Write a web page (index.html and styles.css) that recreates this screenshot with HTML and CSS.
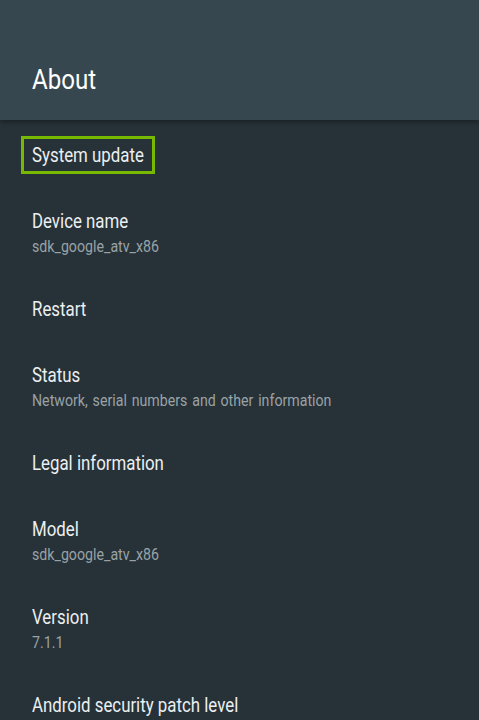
FILE: index.html
```html
<!DOCTYPE html>
<html lang="en">
<head>
<meta charset="utf-8">
<title>About</title>
<link rel="stylesheet" href="styles.css">
</head>
<body>
<div class="screen">
  <header class="header">
    <h1 class="header-title"><span class="txt">About</span></h1>
  </header>
  <ul class="list">
    <li class="item"><div class="title"><span class="focus"><span class="txt txt-fit">System update</span></span></div></li>
    <li class="item"><div class="title"><span class="txt">Device name</span></div><div class="summary"><span class="txt">sdk_google_atv_x86</span></div></li>
    <li class="item"><div class="title"><span class="txt">Restart</span></div></li>
    <li class="item"><div class="title"><span class="txt">Status</span></div><div class="summary"><span class="txt">Network, serial numbers and other information</span></div></li>
    <li class="item"><div class="title"><span class="txt">Legal information</span></div></li>
    <li class="item"><div class="title"><span class="txt">Model</span></div><div class="summary"><span class="txt">sdk_google_atv_x86</span></div></li>
    <li class="item"><div class="title"><span class="txt">Version</span></div><div class="summary"><span class="txt">7.1.1</span></div></li>
    <li class="item"><div class="title"><span class="txt">Android security patch level</span></div></li>
  </ul>
</div>
</body>
</html>
```
FILE: styles.css
```css
html, body {
  margin: 0;
  padding: 0;
  height: 100%;
  overflow: hidden;
  background: #263238;
}
.screen {
  width: 479px;
  min-height: 720px;
  font-family: Roboto, "Liberation Sans", sans-serif;
  background: #263238;
}
.txt {
  display: inline-block;
  white-space: nowrap;
  transform: scaleX(0.842);
  transform-origin: 0 50%;
}
.header {
  height: 120px;
  background: #37474f;
  box-shadow: 0 2px 5px rgba(0, 0, 0, 0.35);
  display: flex;
  align-items: flex-end;
  padding: 0 32px;
  box-sizing: border-box;
  position: relative;
  z-index: 1;
}
.header-title {
  margin: 0 0 24px 0;
  font-size: 28px;
  font-weight: 400;
  line-height: 32px;
  color: #ffffff;
}
.header-title .txt {
  transform: scaleX(0.86);
}
.list {
  list-style: none;
  margin: 0;
  padding: 2px 0 0 0;
}
.item {
  padding: 21px 32px;
  display: flex;
  flex-direction: column;
}
.title {
  font-size: 20px;
  line-height: 24px;
  color: #eceff1;
}
.summary {
  margin-top: 5px;
  font-size: 16.7px;
  line-height: 17px;
  word-spacing: 1.5px;
  color: #9aa2a6;
}
.summary .txt {
  transform: scaleX(0.85);
}
.focus {
  display: inline-block;
  vertical-align: top;
  border: 3px solid #76b900;
  padding: 4px 8px 4px 8px;
  margin: -7px 0 -7px -11px;
}
.txt-fit {
  vertical-align: top;
  margin-right: -21px;
}
```
